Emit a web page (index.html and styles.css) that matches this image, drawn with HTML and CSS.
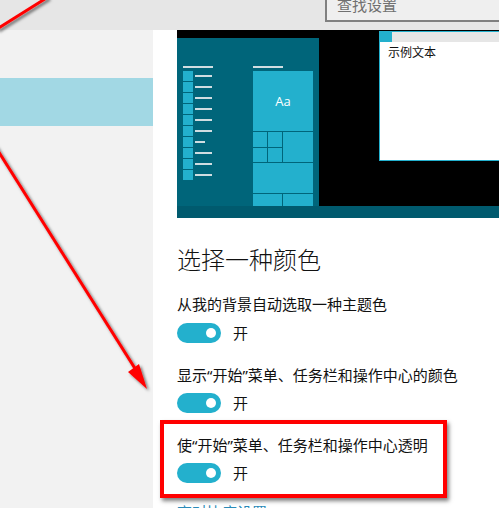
FILE: index.html
```html
<!DOCTYPE html>
<html lang="zh-CN">
<head>
<meta charset="utf-8">
<title>颜色设置</title>
<link rel="stylesheet" href="styles.css">
</head>
<body>
<div class="page">
  <header class="topbar">
    <div class="search">查找设置</div>
  </header>
  <div class="main">
    <aside class="sidebar">
      <div class="nav-item"></div>
    </aside>
    <section class="content">
      <div class="preview">
        <div class="desk">
          <div class="start-col">
            <div class="start-panel">
              <div class="app-list">
                <div class="hdr-line"></div>
                <div class="app"><span class="ico"></span><span class="txt"></span></div>
                <div class="app"><span class="ico"></span><span class="txt"></span></div>
                <div class="app"><span class="ico"></span><span class="txt"></span></div>
                <div class="app"><span class="ico"></span><span class="txt"></span></div>
                <div class="app"><span class="ico"></span><span class="txt"></span></div>
                <div class="app"><span class="ico"></span><span class="txt"></span></div>
                <div class="app"><span class="ico"></span><span class="txt short"></span></div>
                <div class="app"><span class="ico"></span><span class="txt"></span></div>
                <div class="app"><span class="ico"></span><span class="txt"></span></div>
                <div class="app"><span class="ico"></span><span class="txt"></span></div>
              </div>
              <div class="tile-col">
                <div class="hdr-line"></div>
                <div class="tiles">
                  <div class="tile big">Aa</div>
                  <div class="tile"></div>
                  <div class="tile"></div>
                  <div class="tile med"></div>
                  <div class="tile"></div>
                  <div class="tile"></div>
                  <div class="tile wide"></div>
                  <div class="tile half"></div>
                  <div class="tile"></div>
                </div>
              </div>
            </div>
          </div>
          <div class="desk-area">
            <div class="window">
              <div class="win-title"><span class="win-icon"></span></div>
              <div class="win-body">示例文本</div>
            </div>
          </div>
        </div>
        <div class="taskbar"></div>
      </div>

      <h2 class="heading">选择一种颜色</h2>

      <div class="setting first">
        <div class="label">从我的背景自动选取一种主题色</div>
        <div class="toggle-row"><span class="toggle"><span class="knob"></span></span><span class="state">开</span></div>
      </div>
      <div class="setting">
        <div class="label">显示“开始”菜单、任务栏和操作中心的颜色</div>
        <div class="toggle-row"><span class="toggle"><span class="knob"></span></span><span class="state">开</span></div>
      </div>
      <div class="setting">
        <div class="label">使“开始”菜单、任务栏和操作中心透明</div>
        <div class="toggle-row"><span class="toggle"><span class="knob"></span></span><span class="state">开</span></div>
      </div>
      <a class="link">高对比度设置</a>
    </section>
  </div>

  <div class="highlight-box"></div>

  <svg class="arrows" width="499" height="508" viewBox="0 0 499 508">
    <defs>
      <filter id="sh" x="-20%" y="-20%" width="140%" height="140%">
        <feDropShadow dx="2" dy="2" stdDeviation="1.5" flood-color="#000" flood-opacity="0.55"/>
      </filter>
    </defs>
    <g filter="url(#sh)">
      <line x1="48" y1="-3" x2="-3" y2="29" stroke="#ff0000" stroke-width="3"/>
      <line x1="-5" y1="146" x2="141" y2="378" stroke="#ff0000" stroke-width="3"/>
      <polygon points="128,372 139,364 147,389" fill="#ff0000"/>
    </g>
  </svg>
</div>
</body>
</html>
```

FILE: styles.css
```css
* { box-sizing: border-box; }
html, body { margin: 0; padding: 0; }
body {
  width: 499px;
  height: 508px;
  overflow: hidden;
  background: #fff;
  font-family: "Noto Sans", "Noto Sans CJK SC", sans-serif;
  color: #000;
}
.page { position: relative; width: 499px; height: 508px; overflow: hidden; }

.topbar {
  height: 30px;
  background: #e6e6e6;
  display: flex;
}
.search {
  margin-left: 325px;
  flex: 1;
  height: 22px;
  background: #efefef;
  border-left: 2px solid #808080;
  border-bottom: 2px solid #808080;
  padding-left: 10px;
  padding-bottom: 7px;
  display: flex;
  align-items: flex-end;
  font-size: 15px;
  line-height: 15px;
  color: #707070;
}

.main { display: flex; height: 478px; }
.sidebar {
  width: 153px;
  flex: none;
  background: #f2f2f2;
  padding-top: 48px;
}
.nav-item { height: 48px; background: #a2d8e4; }

.content {
  flex: 1;
  padding-left: 24px;
  background: #fff;
  min-width: 0;
}

.preview {
  height: 188px;
  background: #000;
  display: flex;
  flex-direction: column;
}
.desk { display: flex; height: 176px; }
.start-col { padding-top: 8px; flex: none; }
.start-panel {
  width: 142px;
  height: 168px;
  background: #00657a;
  overflow: hidden;
  display: flex;
  padding: 28px 0 0 6px;
  gap: 40px;
}
.hdr-line { width: 30px; height: 2px; background: #d0dde1; margin-bottom: 3px; }
.app-list { display: flex; flex-direction: column; gap: 1px; width: 30px; }
.app-list .hdr-line { margin-bottom: 2px; }
.app { display: flex; align-items: center; gap: 2px; height: 10px; }
.ico { width: 10px; height: 10px; background: #23b0cd; }
.txt { width: 17px; height: 2px; background: #d0dde1; }
.txt.short { width: 10px; }

.tile-col { width: 60px; }
.tiles {
  display: grid;
  grid-template-columns: 14px 14px 30px;
  grid-template-rows: 60px 15px 14px 30px 30px;
  gap: 1px;
}
.tile { background: #23b0cd; }
.tile.big {
  grid-column: 1 / 4;
  color: #fff;
  font-family: "Open Sans", "Noto Sans", sans-serif;
  font-size: 13px;
  display: flex;
  align-items: center;
  justify-content: center;
}
.tile.med { grid-column: 3; grid-row: 2 / 4; }
.tile.wide { grid-column: 1 / 4; }
.tile.half { grid-column: 1 / 3; }

.desk-area { flex: 1; padding: 1px 0 0 60px; min-width: 0; }
.window {
  height: 130px;
  background: #fff;
  border: 1px solid #23b0cd;
  border-right: none;
}
.win-title { height: 10px; background: #e6e6e6; }
.win-icon { display: block; width: 12px; height: 10px; background: #23b0cd; }
.win-body {
  padding: 4px 0 0 8px;
  font-size: 12px;
  line-height: 14px;
  color: #111;
}
.taskbar { height: 12px; background: #005a6e; }

.heading {
  margin: 26px 0 0;
  font-size: 24px;
  line-height: 32px;
  font-weight: 300;
  color: #111;
}

.setting { margin-top: 22px; }
.setting.first { margin-top: 18px; }
.label { font-size: 15px; line-height: 20px; color: #111; }
.toggle-row {
  display: flex;
  align-items: center;
  gap: 12px;
  margin-top: 8px;
  height: 20px;
}
.setting.first .toggle-row { margin-top: 9px; }
.toggle {
  width: 44px;
  height: 20px;
  border-radius: 10px;
  background: #23b0cd;
  display: flex;
  align-items: center;
  justify-content: flex-end;
  padding-right: 5px;
}
.knob { width: 10px; height: 10px; border-radius: 50%; background: #fff; }
.state { font-size: 15px; line-height: 20px; color: #111; }

.link {
  display: block;
  margin-top: 19px;
  font-size: 15px;
  line-height: 20px;
  color: #2a8ab8;
}

.highlight-box {
  position: absolute;
  left: 160px;
  top: 420px;
  width: 287px;
  height: 78px;
  border: 4px solid #ff0000;
  box-shadow: 2px 3px 4px rgba(0,0,0,0.5);
}
.arrows {
  position: absolute;
  left: 0;
  top: 0;
  pointer-events: none;
}
```
